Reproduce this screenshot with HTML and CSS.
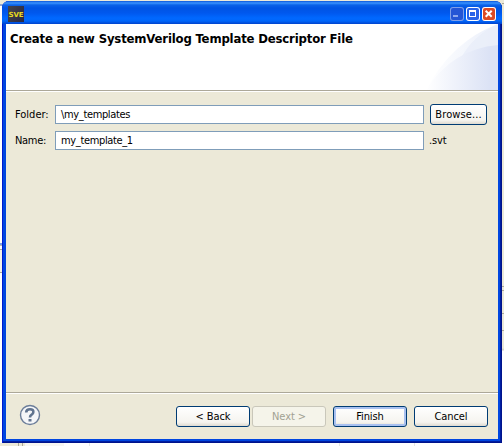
FILE: index.html
```html
<!DOCTYPE html>
<html lang="en">
<head>
<meta charset="utf-8">
<title>New Template Descriptor</title>
<link rel="stylesheet" href="styles.css">
</head>
<body>
<div class="window">
  <div class="titlebar">
    <span class="app-icon">SVE</span>
    <div class="controls">
      <svg class="ctl ctl-min" viewBox="0 0 14 14"><rect x="3" y="8" width="5" height="2" fill="#8fa9ee"/></svg>
      <svg class="ctl ctl-max" viewBox="0 0 14 14" shape-rendering="crispEdges"><path d="M3 3h7v7H3zM4 5v4h5V5z" fill="#fff" fill-rule="evenodd"/></svg>
      <svg class="ctl ctl-close" viewBox="0 0 14 14"><path d="M3.7 3.7l6 6M9.7 3.7l-6 6" stroke="#fff" stroke-width="2"/></svg>
    </div>
  </div>
  <div class="client">
    <header class="banner">
      <svg class="swoosh" viewBox="0 0 72 66" preserveAspectRatio="none">
        <defs>
          <linearGradient id="a"><stop offset="0" stop-color="#fff"/><stop offset="1" stop-color="#eaeffa"/></linearGradient>
          <linearGradient id="b"><stop offset="0" stop-color="#fff"/><stop offset=".9" stop-color="#dbe2f5"/></linearGradient>
        </defs>
        <path d="M0 66Q26 17 72 0V66z" fill="url(#a)"/>
        <path d="M34 36Q46 12 72 0V22z" fill="#e9eef9" opacity=".8"/>
        <path d="M0 66Q26 25 72 21V66z" fill="url(#b)"/>
      </svg>
      <h1>Create a new SystemVerilog Template Descriptor File</h1>
    </header>
    <main class="form">
      <div class="row">
        <label>Folder:</label><div class="field">\my_templates</div><div class="btn browse">Browse...</div>
      </div>
      <div class="row">
        <label class="name">Name:</label><div class="field">my_template_1</div><span class="suffix">.svt</span>
      </div>
    </main>
    <footer class="footer">
      <svg class="help" viewBox="0 0 22 22"><circle cx="11" cy="11" r="9.5" fill="#f5f6f8" stroke="#6b7d99" stroke-width="1.4"/><path d="M7.2 8.6Q7.2 5.2 11 5.2T14.3 8.2Q14.3 9.7 12.4 10.8Q11 11.6 11 13.5" fill="none" stroke="#61748f" stroke-width="2.6"/><rect x="9.5" y="15" width="3" height="2.5" fill="#61748f"/></svg>
      <div class="btn">&lt; Back</div>
      <div class="btn disabled">Next &gt;</div>
      <div class="btn default">Finish</div>
      <div class="btn cancel">Cancel</div>
    </footer>
  </div>
</div>
</body>
</html>
```
FILE: styles.css
```css
* { box-sizing: border-box; }
body {
  margin: 0;
  width: 504px;
  height: 446px;
  padding: 1px 2px 3px;
  overflow: hidden;
  /* desktop slivers visible around the window */
  background:
    linear-gradient(#ece9d8, #ece9d8) 0 0 / 504px 3px no-repeat,
    linear-gradient(90deg, #ece9d8 18px, #aca899 18px 19px, #ece9d8 19px 22px, #aca899 22px 23px, #ece9d8 23px 25px, #f7f6f2 25px 64px, #fff 64px 89px, #e6e6e2 89px 90px, #fff 90px 339px, #e6e6e2 339px 340px, #fff 340px 414px, #e6e6e2 414px 415px, #fff 415px) 0 443px / 504px 3px no-repeat,
    linear-gradient(#ece9d8 3px, #aca899 3px 4px, #ece9d8 4px 286px, #aca899 286px 287px, #ece9d8 287px 290px, #aca899 290px 291px, #ece9d8 291px 313px, #aca899 313px 314px, #ece9d8 314px 330px, #aca899 330px 331px, #ece9d8 331px 348px, #d0cec4 350px, #fff 351px) 502px 0 / 2px 443px no-repeat,
    linear-gradient(#ece9d8 4px, #8fa6cf 4px 6px, #fff 6px 243px, #7f9de0 243px 245px, #bcbab0 245px 246px, #fff 246px 249px, #aca899 249px 250px, #f4f2e8 250px 272px, #aca899 272px 273px, #fff 273px) 0 0 / 6px 443px no-repeat,
    #ece9d8;
  font-family: "DejaVu Sans Condensed", "DejaVu Sans", sans-serif;
  font-size: 11px;
  letter-spacing: -0.1px;
  color: #000;
}
.window {
  height: 442px;
  padding: 0 4px 4px;
  border-radius: 7px 7px 0 0;
  background: #0046e0;
  box-shadow: inset 1px 0 #0019cf, inset -1px -1px #00138c, inset -2px -2px #001ea0;
}
.titlebar {
  height: 23px;
  margin: 0 -4px;
  padding: 5px 6px 0;
  display: flex;
  justify-content: space-between;
  border-radius: 7px 7px 0 0;
  background: linear-gradient(#0a55d8 0, #3a93ff 2px, #0a62e8 4px, #0054e3 7px, #0058ee 12px, #0068ff 17px, #0066fa 20px, #0042cc 23px);
}
.app-icon {
  width: 16px;
  height: 16px;
  background: linear-gradient(120deg, #45454b, #292744);
  color: #e8d820;
  font: bold 7px/18px "DejaVu Sans", sans-serif;
  text-align: center;
}
.controls { display: flex; gap: 2px; }
.ctl { width: 14px; height: 14px; border-radius: 3px; margin-top: 1px; }
.ctl-min { background: #2455d5; box-shadow: inset 0 0 0 1px #7f9fe8; }
.ctl-max { background: #2963e8; box-shadow: inset 0 0 0 1px #fff; }
.ctl-close { background: #dc4a24; box-shadow: inset 0 0 0 1px #fff; }
.client {
  height: 415px;
  display: flex;
  flex-direction: column;
  background: #ece9d8;
}
.banner {
  position: relative;
  height: 68px;
  background: #fff;
  border-bottom: 1px solid #fff;
  box-shadow: inset 0 -1px #aca899;
}
.swoosh { position: absolute; right: 0; top: 0; width: 72px; height: 66px; }
h1 {
  position: relative;
  margin: 0;
  padding: 7px 0 0 4px;
  font-size: 13px;
  line-height: 16px;
  letter-spacing: -0.17px;
  white-space: nowrap;
}
.form { flex: 1; padding: 12px 0 0 9px; }
.row { display: flex; align-items: center; height: 21px; margin-bottom: 5px; }
label { width: 40px; letter-spacing: 0; }
.name { letter-spacing: -0.3px; }
.field {
  width: 369px;
  height: 19px;
  border: 1px solid #7f9db9;
  background: #fff;
  padding-left: 5px;
  line-height: 17px;
  letter-spacing: -0.35px;
}
.btn {
  width: 74px;
  height: 21px;
  border: 1px solid #003c74;
  border-radius: 3px;
  background: linear-gradient(#fff, #f5f4ef 80%, #dedad0);
  text-align: center;
  line-height: 19px;
}
.browse { width: 57px; margin-left: 6px; letter-spacing: 0.1px; }
.suffix { margin-left: 5px; }
.footer {
  height: 47px;
  border-top: 1px solid #aca899;
  box-shadow: inset 0 1px #fff;
  display: flex;
  padding: 13px 10px 0 13px;
}
.help { width: 22px; height: 22px; margin: -2px auto 0 0; }
.disabled { margin-left: 2px; border-color: #c9c7ba; background: #f5f4ea; color: #a1a192; }
.default { margin-left: 7px; box-shadow: inset 0 0 0 2px #a9c1f0; }
.cancel { margin-left: 7px; }
```
